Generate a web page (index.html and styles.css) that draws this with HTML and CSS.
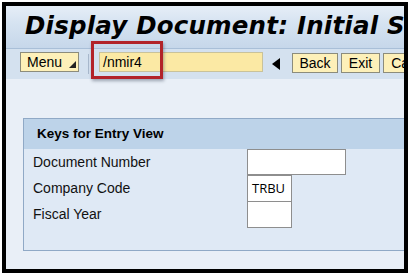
FILE: index.html
```html
<!DOCTYPE html>
<html>
<head>
<meta charset="utf-8">
<link rel="stylesheet" href="styles.css">
</head>
<body>
<div class="frame">
  <div class="titlebar"><h1 class="title">Display Document: Initial Screen</h1></div>
  <div class="toolbar">
    <button class="btn menu">Menu <span class="tri"></span></button>
    <span class="sep"></span>
    <div class="cmd">/nmir4</div>
    <span class="arrow"></span>
    <button class="btn back">Back</button>
    <button class="btn exit">Exit</button>
    <button class="btn cancel">Cancel</button>
    <div class="highlight"></div>
  </div>
  <div class="content">
    <div class="group">
      <div class="group-head">Keys for Entry View</div>
      <div class="rows">
        <div class="label">Document Number</div>
        <div class="field wide"></div>
        <div class="label">Company Code</div>
        <div class="field small">TRBU</div>
        <div class="label">Fiscal Year</div>
        <div class="field small"></div>
      </div>
    </div>
  </div>
</div>
</body>
</html>
```
FILE: styles.css
```css
html, body { margin: 0; padding: 0; background: #ffffff; }
body { width: 413px; height: 278px; overflow: hidden; font-family: "Liberation Sans", Arial, sans-serif; }
.frame {
  margin: 2px 0 0 2px;
  width: 398px;
  height: 263px;
  border: 4px solid #000;
  background: #e9eff7;
  overflow: hidden;
  position: relative;
}
.titlebar {
  height: 42px;
  background: linear-gradient(#e6eef7 0%, #d6e3f1 40%, #c6d7ea 100%);
  overflow: hidden;
}
.title {
  margin: 0;
  padding: 5px 0 0 19px;
  font-family: "DejaVu Sans", Verdana, sans-serif;
  font-weight: bold;
  font-style: italic;
  font-size: 24.5px;
  line-height: 29px;
  white-space: nowrap;
  color: #000;
  letter-spacing: 0.2px;
}
.toolbar {
  position: relative;
  height: 27px;
  border-top: 1px solid #a9bfd8;
  background: #d4e1ef;
  display: flex;
  align-items: flex-start;
  padding-top: 3px;
  padding-left: 14px;
  box-sizing: content-box;
  white-space: nowrap;
}
.btn {
  font-family: "Liberation Sans", Arial, sans-serif;
  font-size: 14px;
  height: 20px;
  line-height: 18px;
  padding: 0 4px;
  margin: 0;
  background: #fdf0b9;
  border: 1px solid #8c8c7c;
  color: #000;
  flex: none;
  box-sizing: border-box;
}
.menu { width: 59px; text-align: left; padding-left: 6px; }
.tri {
  display: inline-block;
  width: 0; height: 0;
  border-left: 7px solid transparent;
  border-bottom: 7px solid #222;
  margin-left: 3px;
  vertical-align: -1px;
}
.sep {
  width: 1px;
  height: 20px;
  background: #a8b8cc;
  margin: 2px 10px 0 9px;
  flex: none;
}
.cmd {
  width: 164px;
  height: 20px;
  box-sizing: border-box;
  background: #fbe9a4;
  border: 1px solid #c9c29a;
  font-size: 14px;
  line-height: 18px;
  padding-left: 3px;
  flex: none;
}
.arrow {
  width: 0; height: 0;
  border-top: 6px solid transparent;
  border-bottom: 6px solid transparent;
  border-right: 8px solid #000;
  margin: 6px 12px 0 9px;
  flex: none;
}
.back { width: 46px; margin-right: 3px; margin-top: 1px; }
.exit { width: 39px; margin-right: 3px; margin-top: 1px; }
.cancel { width: 60px; margin-top: 1px; }
.highlight {
  position: absolute;
  left: 85px;
  top: -8px;
  width: 72px;
  height: 38px;
  box-sizing: border-box;
  border: 3px solid #b22329;
  box-shadow: 1px 2px 3px rgba(60, 70, 90, 0.45);
}
.content {
  padding: 39px 0 0 17px;
}
.group {
  width: 420px;
  height: 133px;
  box-sizing: border-box;
  border: 1px solid #90a9c6;
  background: #dfe9f5;
}
.group-head {
  height: 30px;
  background: #bdd3e9;
  font-weight: bold;
  font-size: 13.5px;
  line-height: 30px;
  padding-left: 13px;
}
.rows {
  display: grid;
  grid-template-columns: 214px auto;
  padding-left: 9px;
  justify-items: start;
}
.label {
  font-size: 14px;
  line-height: 27px;
  height: 26px;
  color: #111;
}
.field {
  background: #fff;
  border: 1px solid #8e8e8e;
  box-sizing: border-box;
  height: 27px;
  margin-bottom: -1px;
}
.field.wide { width: 99px; height: 26px; margin-bottom: 0; }
.field.small {
  width: 45px;
  font-family: "Open Sans", sans-serif;
  font-size: 13px;
  line-height: 24px;
  padding-left: 4px;
}
```
